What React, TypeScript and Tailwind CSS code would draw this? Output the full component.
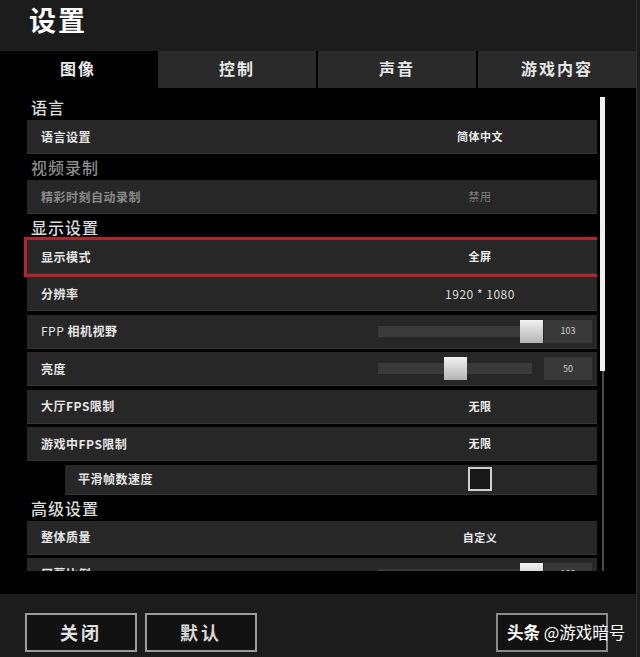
import React from "react";

const FONT = { fontFamily: '"Noto Sans CJK SC", "Noto Sans", sans-serif' };

function Header({ text, dim }: { text: string; dim?: boolean }) {
  return (
    <div
      className={`h-[26px] flex items-center pl-[4px] text-[16px] font-medium tracking-[1px] ${
        dim ? "text-[#8c8c8c]" : "text-[#dcdcdc]"
      }`}
    >
      {text}
    </div>
  );
}

function Row({
  label,
  children,
  dim,
  red,
  indent,
  h = "h-[34px]",
  mb = "mb-[3.5px]",
}: {
  label: React.ReactNode;
  children?: React.ReactNode;
  dim?: boolean;
  red?: boolean;
  indent?: boolean;
  h?: string;
  mb?: string;
}) {
  return (
    <div
      className={`${h} ${mb} flex items-center bg-[#272727] border-b border-[#353535] ${
        indent ? "ml-[38px] pl-[13px]" : "pl-[14px]"
      } ${red ? "shadow-[0_0_0_3px_#b8222b]" : ""}`}
    >
      <div
        className={`flex-1 text-[12px] font-bold tracking-[0.5px] ${
          dim ? "text-[#8a8a8a]" : "text-[#e6e6e6]"
        }`}
      >
        {label}
      </div>
      <div className="w-[234px] flex justify-center items-center">{children}</div>
    </div>
  );
}

function Val({ t, dim, normal }: { t: string; dim?: boolean; normal?: boolean }) {
  return (
    <span
      className={`${normal ? "text-[12px] font-normal text-[#dedede]" : "text-[11px] font-bold"} ${
        dim ? "text-[#7e7e7e] font-normal" : normal ? "" : "text-[#ececec]"
      } tracking-[0.5px]`}
    >
      {t}
    </span>
  );
}

function Slider({ pos, value }: { pos: number; value: string }) {
  return (
    <div className="w-full flex items-center pl-[15px]">
      <div className="relative w-[154px] h-[11px] bg-[#3a3a3a]">
        <div
          className="absolute top-[-6px] w-[23px] h-[23px] bg-gradient-to-b from-[#f2f2f2] to-[#b4b4b4]"
          style={{ left: pos }}
        />
      </div>
      <div className="ml-[12px] w-[48px] h-[23px] bg-[#393939] flex items-center justify-center text-[9px] text-[#cfcfcf]">
        {value}
      </div>
    </div>
  );
}

export default function App() {
  return (
    <div className="w-[640px] h-[657px] flex bg-black overflow-hidden" style={FONT}>
      <div className="w-[636px] flex flex-col">
        {/* Title */}
        <div className="h-[51px] bg-[#1c1c1c] flex items-start pt-[1px] pl-[29px]">
          <span className="text-[27px] leading-[38px] font-bold text-white tracking-[2px]">设置</span>
        </div>
        {/* Tabs */}
        <div className="h-[37px] flex gap-[2px] bg-black">
          <div className="w-[156px] bg-black flex items-center justify-center pb-[4px] text-[16px] font-bold text-[#ececec] tracking-[2px]">
            图像
          </div>
          <div className="w-[158px] bg-[#2a2a2a] flex items-center justify-center pb-[4px] text-[16px] font-bold text-[#e6e6e6] tracking-[2px]">
            控制
          </div>
          <div className="w-[158px] bg-[#2a2a2a] flex items-center justify-center pb-[4px] text-[16px] font-bold text-[#e6e6e6] tracking-[2px]">
            声音
          </div>
          <div className="flex-1 bg-[#2a2a2a] flex items-center justify-center pb-[4px] text-[16px] font-bold text-[#e6e6e6] tracking-[2px]">
            游戏内容
          </div>
        </div>
        {/* Content */}
        <div className="relative h-[506px] bg-black">
          <div className="h-[483px] overflow-hidden pt-[6px] pl-[27px] w-[597px]">
            <Header text="语言" />
            <Row label="语言设置" mb="mb-0">
              <Val t="简体中文" />
            </Row>
            <Header text="视频录制" dim />
            <Row label="精彩时刻自动录制" dim mb="mb-0">
              <Val t="禁用" dim />
            </Row>
            <Header text="显示设置" />
            <Row label="显示模式" red mb="mb-[3px]">
              <Val t="全屏" />
            </Row>
            <Row label="分辨率">
              <Val t="1920 * 1080" normal />
            </Row>
            <Row
              label={
                <span>
                  <span className="font-normal">FPP</span> 相机视野
                </span>
              }
            >
              <Slider pos={142} value="103" />
            </Row>
            <Row label="亮度">
              <Slider pos={66} value="50" />
            </Row>
            <Row label="大厅FPS限制">
              <Val t="无限" />
            </Row>
            <Row label="游戏中FPS限制">
              <Val t="无限" />
            </Row>
            <Row label="平滑帧数速度" indent h="h-[30px]" mb="mb-0">
              <div className="w-[24px] h-[24px] border-2 border-[#cfcfcf] bg-[#181818]" />
            </Row>
            <Header text="高级设置" />
            <Row label="整体质量" mb="mb-[3px]">
              <Val t="自定义" />
            </Row>
            <Row label="屏幕比例">
              <Slider pos={142} value="100" />
            </Row>
          </div>
          {/* scrollbar */}
          <div className="absolute left-[602px] top-[9px] w-[2px] h-[474px] bg-[#4a4a4a]" />
          <div className="absolute left-[600px] top-[9px] w-[5px] h-[274px] bg-[#f0f0f0]" />
        </div>
        {/* Footer */}
        <div className="flex-1 bg-[#1c1c1c] flex items-start pt-[19px] pl-[25px]">
          <div className="w-[112px] h-[39px] border-2 border-[#9c9c9c] bg-[#121212] flex items-center justify-center text-[18px] font-bold text-[#e0e0e0] tracking-[3px]">
            关闭
          </div>
          <div className="ml-[8px] w-[112px] h-[39px] border-2 border-[#9c9c9c] bg-[#121212] flex items-center justify-center text-[18px] font-bold text-[#d8d8d8] tracking-[3px]">
            默认
          </div>
          <div className="ml-[239px] w-[112px] h-[39px] border-2 border-[#8a8a8a] bg-[#121212] flex items-center pl-[9px] whitespace-nowrap overflow-visible">
            <span className="text-[16.5px] text-white">
              <span className="font-bold">头条</span> @游戏暗号
            </span>
          </div>
        </div>
      </div>
      <div className="w-[4px] bg-[#1c1c1c] border-l border-[#333]" />
    </div>
  );
}
